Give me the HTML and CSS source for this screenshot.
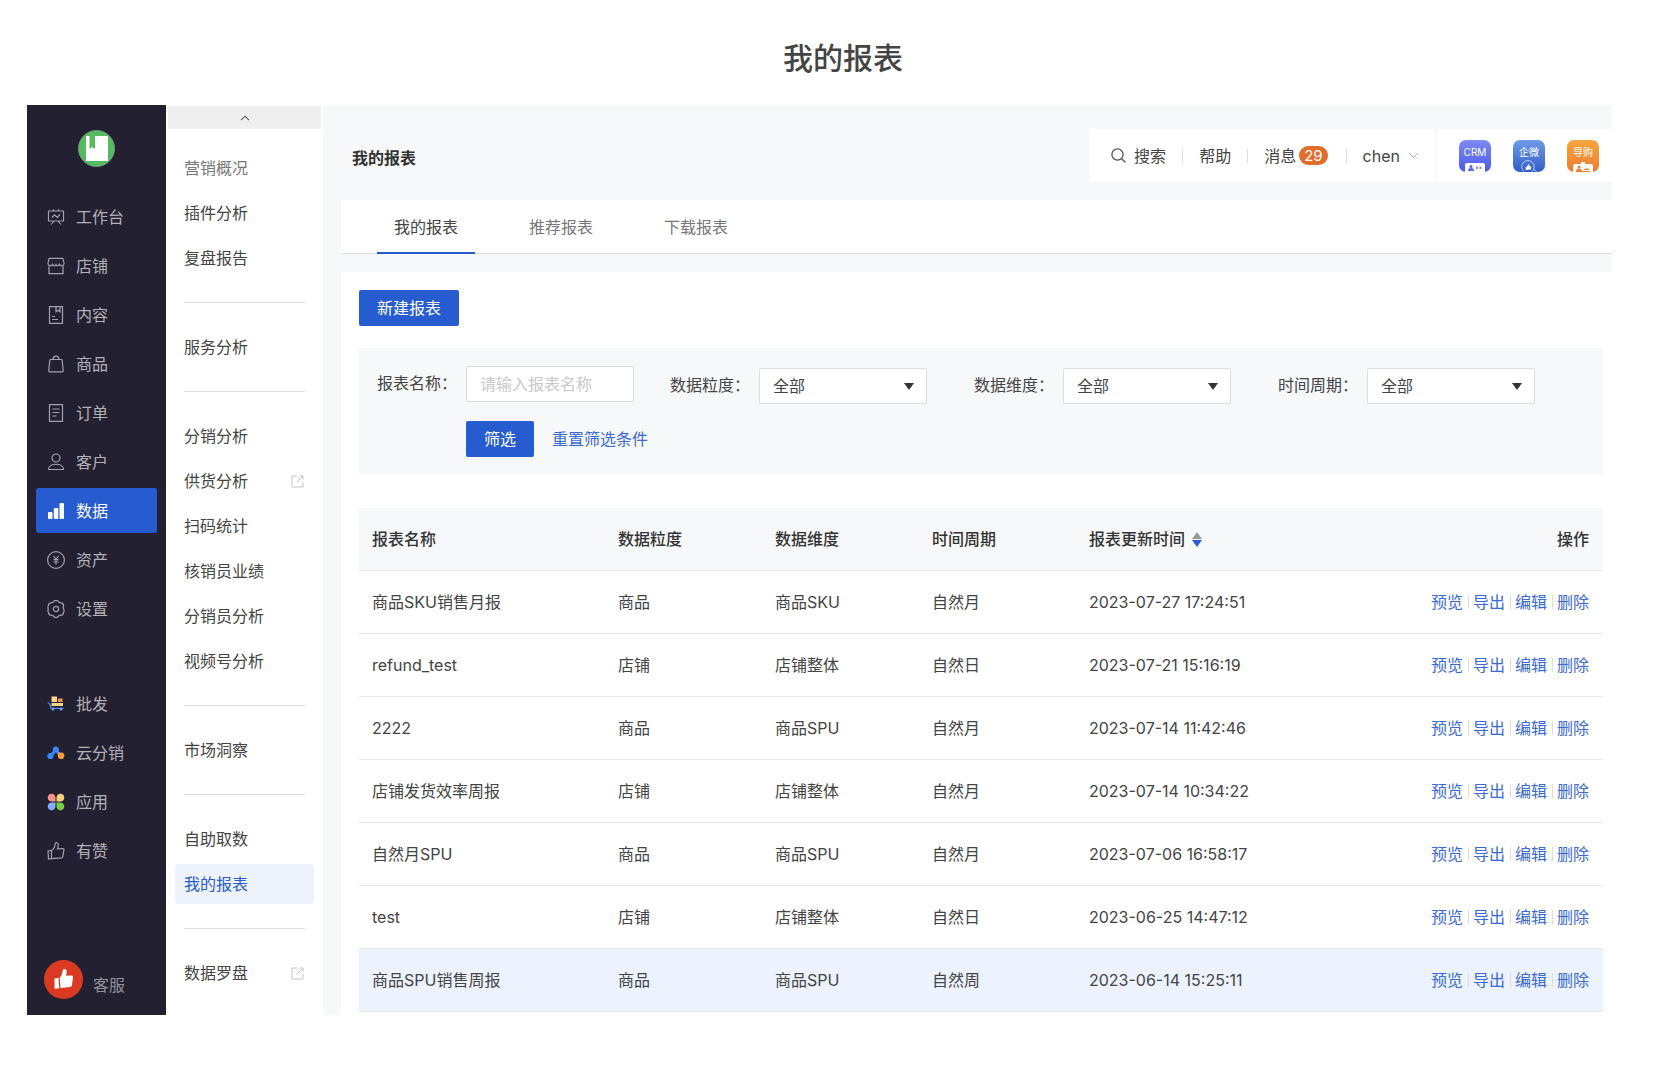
FILE: index.html
```
<!DOCTYPE html>
<html lang="zh-CN">
<head>
  <meta charset="UTF-8">
  <meta name="viewport" content="width=device-width, initial-scale=1.0">
  <title>我的报表</title>
  <link rel="stylesheet" href="styles.css">
</head>
<body>
  <h1 class="page-title">我的报表</h1>

  <div class="app">
    <!-- Main sidebar -->
    <aside class="sidebar">
      <svg class="logo" viewBox="0 0 37 37">
        <circle cx="18.500" cy="18.500" r="18" fill="#54bb60" stroke="#7d8f86" stroke-width="1"/>
        <path d="M8 6h3.500v13l2.700-2 2.800 2V6h13v25H8z" fill="#fff"/>
      </svg>

      <nav class="side-nav">
        <a class="side-link" href="#">
          <svg class="icon" viewBox="0 0 18 18"><path d="M1.500 3h15v10h-15zM6.500 3V1.300M11.500 3V1.300M7 13l-2.800 3.500M11 13l2.800 3.500M5 9.500l2.500-2.700 2.700 2.600L13 6.500"/></svg>
          工作台
        </a>
        <a class="side-link" href="#">
          <svg class="icon" viewBox="0 0 18 18"><path d="M2.300 1.300h13.400l1.400 5c0 2.900-3.800 3.200-4.700.9-.8 2-2.600 2.200-3.400.3-.8 1.900-2.600 1.700-3.400-.3-.9 2.300-4.700 2-4.700-.9zM2 8.800v7.900h14V8.800"/></svg>
          店铺
        </a>
        <a class="side-link" href="#">
          <svg class="icon" viewBox="0 0 18 18"><path d="M2.500.7h13v16.600h-13zM9 .7v5l2-1.500 2 1.500v-5M5 10.500h3M5 13.500h6"/></svg>
          内容
        </a>
        <a class="side-link" href="#">
          <svg class="icon" viewBox="0 0 18 18"><path d="M3.700 4.500h10.600c.5 0 .8.300.9.800l1 10.500c0 .6-.3 1-.9 1H2.700c-.6 0-.9-.4-.9-1l1-10.500c.1-.5.4-.8.9-.8zM6 4.500c0-4.400 6-4.400 6 0"/></svg>
          商品
        </a>
        <a class="side-link" href="#">
          <svg class="icon" viewBox="0 0 18 18"><path d="M2.500.7h13v16.600h-13zM5.500 5h7M5.500 8.500h7M5.500 12h4"/></svg>
          订单
        </a>
        <a class="side-link" href="#">
          <svg class="icon" viewBox="0 0 18 18"><circle cx="9" cy="5" r="4"/><path d="M1.500 16.500c0-7 15-7 15 0z"/></svg>
          客户
        </a>
        <a class="side-link active" href="#">
          <svg class="icon" viewBox="0 0 18 18"><g fill="#fff" stroke="none"><rect x="1" y="10" width="4.500" height="7" rx="1"/><rect x="6.800" y="6" width="4.500" height="11" rx="1"/><rect x="12.500" y="1" width="4.500" height="16" rx="1"/></g></svg>
          数据
        </a>
        <a class="side-link" href="#">
          <svg class="icon" viewBox="0 0 18 18"><circle cx="9" cy="9" r="8.400"/><path d="M6.500 5L9 8.300 11.500 5M9 8.300V13.500M6.500 8.700h5M6.500 11h5"/></svg>
          资产
        </a>
        <a class="side-link" href="#">
          <svg class="icon" viewBox="0 0 18 18"><path d="M7 1.200Q9-.4 11 1.200q.8 1.700 2.700 1.400 2.900.5 2.900 3.200-1 1.600 0 3.200 1 1.600 0 3.200 0 2.700-2.900 3.200-1.900-.3-2.700 1.400-2 1.600-4 0-.8-1.700-2.700-1.400-2.900-.5-2.900-3.200-1-1.600 0-3.200-1-1.600 0-3.200 0-2.700 2.900-3.200Q6.200 2.900 7 1.200z"/><circle cx="9" cy="9" r="2.700"/></svg>
          设置
        </a>
      </nav>

      <nav class="side-nav side-nav-more">
        <a class="side-link" href="#">
          <svg class="icon" viewBox="0 0 18 18"><g stroke="none"><path d="M4.500 1.500H10v5.500H4.500z" fill="#ffd58a"/><path d="M11 3.500h4.500V7H11z" fill="#f29b38"/><path d="M4.500 8h11.500v3H4.500z" fill="#fbd38b"/></g><path d="M.8 7.500l2 1.500 1.200 4.300h12.500" stroke="#4e8be8" stroke-width="1.200"/><circle cx="6" cy="14" r="1.500" fill="#6ba3f5" stroke="none"/><circle cx="14" cy="14" r="1.500" fill="#6ba3f5" stroke="none"/></svg>
          批发
        </a>
        <a class="side-link" href="#">
          <svg class="icon" viewBox="0 0 18 18"><path d="M3.500 12L8.800 6l3 3.500" stroke="#3b87f7" stroke-width="3"/><g stroke="none"><circle cx="3.400" cy="12" r="3.100" fill="#3b87f7"/><circle cx="8.800" cy="5.600" r="3" fill="#3b87f7"/><path d="M11 8.500h3.500a3.300 3.300 0 1 1-3.700 3.500z" fill="#f59c3c"/></g></svg>
          云分销
        </a>
        <a class="side-link" href="#">
          <svg class="icon" viewBox="0 0 18 18"><g stroke="none"><path d="M8.500 8.500H4.800A3.900 3.900 0 1 1 8.500 4.800z" fill="#f6928b"/><path d="M9.500 8.500V4.800a3.900 3.900 0 1 1 3.700 3.700z" fill="#fbcf7d"/><path d="M8.500 9.500v3.700a3.900 3.900 0 1 1-3.700-3.700z" fill="#86abfb"/><path d="M9.500 9.500h3.700a3.900 3.900 0 1 1-3.700 3.700z" fill="#76cf42"/></g></svg>
          应用
        </a>
        <a class="side-link" href="#">
          <svg class="icon" viewBox="0 0 18 18"><path d="M1 9l3.500-.6v8.300L1.500 17zM4.500 8.400C7 7.200 8 5 8.300 1.500c.2-1.300 3-1.200 3 1.300 0 1.700-.3 3-.8 4l5.300-.3c.8 0 1.200.6 1.100 1.400l-1 6.600c-.1.700-.6 1.200-1.400 1.300l-10 .9"/></svg>
          有赞
        </a>
      </nav>

      <a class="service" href="#">
        <svg class="service-icon" viewBox="0 0 39 39"><circle cx="19.500" cy="19.500" r="19.500" fill="#da3a22"/><path d="M10.500 18.500l4-.8.8 10.500-4 .6c-.5 0-.8-.3-.8-.8zM15.700 17.500c2-1.500 2.500-4.500 3-7.300.4-2 4.300-1.800 4 1.500l-.6 4 5.500-.3c1 0 1.500.7 1.400 1.600L28 25c-.1 1-.8 1.700-1.800 1.900l-9.700 1.200z" fill="#fff"/></svg>
        客服
      </a>
    </aside>

    <!-- Second level menu -->
    <nav class="submenu">
      <button class="submenu-up" type="button" aria-label="向上">
        <svg width="10" height="6" viewBox="0 0 10 6"><path d="M1 5.200l4-4 4 4" fill="none" stroke="#555" stroke-width="1.100"/></svg>
      </button>
      <div class="submenu-list">
        <a class="sub-link faded" href="#">营销概况</a>
        <a class="sub-link" href="#">插件分析</a>
        <a class="sub-link" href="#">复盘报告</a>
        <hr class="sub-divider">
        <a class="sub-link" href="#">服务分析</a>
        <hr class="sub-divider">
        <a class="sub-link" href="#">分销分析</a>
        <a class="sub-link" href="#">供货分析
          <svg class="external" viewBox="0 0 13 13"><path d="M6 1H1v11h11V7M8.500 1H12v3.500M12 1L5.500 7.500"/></svg>
        </a>
        <a class="sub-link" href="#">扫码统计</a>
        <a class="sub-link" href="#">核销员业绩</a>
        <a class="sub-link" href="#">分销员分析</a>
        <a class="sub-link" href="#">视频号分析</a>
        <hr class="sub-divider">
        <a class="sub-link" href="#">市场洞察</a>
        <hr class="sub-divider">
        <a class="sub-link" href="#">自助取数</a>
        <a class="sub-link active" href="#">我的报表</a>
        <hr class="sub-divider">
        <a class="sub-link" href="#">数据罗盘
          <svg class="external" viewBox="0 0 13 13"><path d="M6 1H1v11h11V7M8.500 1H12v3.500M12 1L5.500 7.500"/></svg>
        </a>
      </div>
    </nav>

    <main class="main">
      <header class="header">
        <h2 class="header-title">我的报表</h2>
        <div class="toolbar">
          <a class="tool" href="#">
            <svg class="search-icon" viewBox="0 0 15 15"><circle cx="6.500" cy="6.500" r="5.600"/><path d="M10.600 10.600l3.900 3.900"/></svg>
            搜索
          </a>
          <a class="tool" href="#">帮助</a>
          <a class="tool messages" href="#">消息<span class="badge">29</span></a>
          <a class="tool user" href="#">chen
            <svg width="11" height="7" viewBox="0 0 11 7"><path d="M1 1l4.500 4.500L10 1" fill="none" stroke="#aaa"/></svg>
          </a>
        </div>
        <div class="apps">
          <svg class="app-icon" viewBox="0 0 32 32">
            <defs><linearGradient id="crm" x2="0" y2="1"><stop offset="0" stop-color="#7d8bf3"/><stop offset="1" stop-color="#4c5aec"/></linearGradient></defs>
            <rect width="32" height="32" rx="7" fill="url(#crm)"/>
            <text class="app-text" x="16" y="16">CRM</text>
            <path d="M6 32v-7q0-2 2-2h16q2 0 2 2v7z" fill="#fff"/>
            <circle cx="12" cy="26.500" r="1.500" fill="#5563ee"/><path d="M9 31q0-3 3-3t3 3z" fill="#5563ee"/><path d="M17 26.500h2v2.500h-2zM20.500 26.500h2v2.500h-2z" fill="#8792f3"/>
          </svg>
          <svg class="app-icon" viewBox="0 0 32 32">
            <defs><linearGradient id="wecom" x2="0" y2="1"><stop offset="0" stop-color="#6f9bea"/><stop offset="1" stop-color="#335dc6"/></linearGradient></defs>
            <rect width="32" height="32" rx="7" fill="url(#wecom)"/>
            <text class="app-text" x="16" y="16">企微</text>
            <g fill="none" stroke="#bccff5"><path d="M11 31.500a6.200 6.200 0 1 1 8 0M21 29.500l2.500 2"/></g>
            <path d="M12.500 27l1.500-.3 1.200-2.500 1.200.4-.2 1.700 2.200.2-.5 3-5.200.6z" fill="#fff"/>
          </svg>
          <svg class="app-icon" viewBox="0 0 32 32">
            <defs><linearGradient id="guide" x2="0" y2="1"><stop offset="0" stop-color="#f5a63e"/><stop offset="1" stop-color="#ef7b2f"/></linearGradient></defs>
            <rect width="32" height="32" rx="7" fill="url(#guide)"/>
            <text class="app-text" x="16" y="16">导购</text>
            <path d="M14 22h4v2h6q2 0 2 2v6h-3v-1H9v1H6v-6q0-2 2-2h6z" fill="#fff"/>
            <circle cx="12" cy="27" r="1.600" fill="#f08535"/><path d="M9 31.500q0-3 3-3t3 3zM17.500 28.500h4.500v1.500h-4.500z" fill="#f08535"/>
          </svg>
        </div>
      </header>

      <nav class="tabs">
        <a class="tab active" href="#">我的报表</a>
        <a class="tab" href="#">推荐报表</a>
        <a class="tab" href="#">下载报表</a>
      </nav>

      <section class="content">
        <button class="btn btn-new" type="button">新建报表</button>

        <!-- Filters -->
        <form class="filter">
          <div class="filter-row">
            <div class="field field-name">
              <label for="name">报表名称：</label>
              <input class="control" type="text" id="name" placeholder="请输入报表名称">
            </div>
            <div class="field">
              <label for="grain">数据粒度：</label>
              <div class="select-box"><select class="control" id="grain"><option>全部</option></select></div>
            </div>
            <div class="field">
              <label for="dimension">数据维度：</label>
              <div class="select-box"><select class="control" id="dimension"><option>全部</option></select></div>
            </div>
            <div class="field">
              <label for="period">时间周期：</label>
              <div class="select-box"><select class="control" id="period"><option>全部</option></select></div>
            </div>
          </div>
          <div class="filter-actions">
            <button class="btn" type="button">筛选</button>
            <a class="link" href="#">重置筛选条件</a>
          </div>
        </form>

        <!-- Report list -->
        <table class="table">
          <thead>
            <tr>
              <th class="col-name">报表名称</th>
              <th class="col-mid">数据粒度</th>
              <th class="col-mid">数据维度</th>
              <th class="col-mid">时间周期</th>
              <th>报表更新时间<svg class="sort" viewBox="0 0 10 16"><path d="M5 0l5 7H0z" fill="#999"/><path d="M0 8h10l-5 7z" fill="#275cd0"/></svg></th>
              <th class="ops">操作</th>
            </tr>
          </thead>
          <tbody>
            <tr>
              <td>商品SKU销售月报</td><td>商品</td><td>商品SKU</td><td>自然月</td><td>2023-07-27 17:24:51</td>
              <td class="ops"><a class="link" href="#">预览</a><a class="link" href="#">导出</a><a class="link" href="#">编辑</a><a class="link" href="#">删除</a></td>
            </tr>
            <tr>
              <td>refund_test</td><td>店铺</td><td>店铺整体</td><td>自然日</td><td>2023-07-21 15:16:19</td>
              <td class="ops"><a class="link" href="#">预览</a><a class="link" href="#">导出</a><a class="link" href="#">编辑</a><a class="link" href="#">删除</a></td>
            </tr>
            <tr>
              <td>2222</td><td>商品</td><td>商品SPU</td><td>自然月</td><td>2023-07-14 11:42:46</td>
              <td class="ops"><a class="link" href="#">预览</a><a class="link" href="#">导出</a><a class="link" href="#">编辑</a><a class="link" href="#">删除</a></td>
            </tr>
            <tr>
              <td>店铺发货效率周报</td><td>店铺</td><td>店铺整体</td><td>自然月</td><td>2023-07-14 10:34:22</td>
              <td class="ops"><a class="link" href="#">预览</a><a class="link" href="#">导出</a><a class="link" href="#">编辑</a><a class="link" href="#">删除</a></td>
            </tr>
            <tr>
              <td>自然月SPU</td><td>商品</td><td>商品SPU</td><td>自然月</td><td>2023-07-06 16:58:17</td>
              <td class="ops"><a class="link" href="#">预览</a><a class="link" href="#">导出</a><a class="link" href="#">编辑</a><a class="link" href="#">删除</a></td>
            </tr>
            <tr>
              <td>test</td><td>店铺</td><td>店铺整体</td><td>自然日</td><td>2023-06-25 14:47:12</td>
              <td class="ops"><a class="link" href="#">预览</a><a class="link" href="#">导出</a><a class="link" href="#">编辑</a><a class="link" href="#">删除</a></td>
            </tr>
            <tr class="selected">
              <td>商品SPU销售周报</td><td>商品</td><td>商品SPU</td><td>自然周</td><td>2023-06-14 15:25:11</td>
              <td class="ops"><a class="link" href="#">预览</a><a class="link" href="#">导出</a><a class="link" href="#">编辑</a><a class="link" href="#">删除</a></td>
            </tr>
          </tbody>
        </table>
      </section>
    </main>
  </div>
</body>
</html>
```
FILE: styles.css
```
/* General reset */
* {
  margin: 0;
  padding: 0;
  box-sizing: border-box;
}
body {
  font-family: Inter, "Noto Sans CJK SC", sans-serif;
  font-size: 16px;
  line-height: 24px;
  color: #444;
  background-color: #fff;
}
a {
  color: inherit;
  text-decoration: none;
}
button, input, select {
  font: inherit;
  color: inherit;
}

.page-title {
  padding: 36px 0 25px 12px;
  font-size: 30px;
  line-height: 44px;
  font-weight: 500;
  text-align: center;
}
.app {
  display: flex;
  margin: 0 62px 0 27px;
}

/* Main sidebar */
.sidebar {
  display: flex;
  flex-direction: column;
  flex: none;
  width: 139px;
  padding: 25px 9px 16px;
  background-color: #222031;
  color: #b2b1b8;
}
.logo {
  width: 37px;
  height: 37px;
  margin: 0 auto 27px;
}
.side-nav {
  display: flex;
  flex-direction: column;
  gap: 4px;
}
.side-nav-more {
  margin-top: 50px;
}
.side-link {
  display: flex;
  align-items: center;
  gap: 11px;
  height: 45px;
  padding-left: 11px;
  border-radius: 3px;
}
.side-link.active {
  background-color: #275cd0;
  color: #fff;
}
.icon {
  width: 18px;
  height: 18px;
  fill: none;
  stroke: #a3a2aa;
  stroke-width: 1.2;
}
.service {
  display: flex;
  align-items: flex-end;
  gap: 10px;
  margin-top: auto;
  padding-left: 8px;
  line-height: 28px;
  color: #93929b;
}
.service-icon {
  width: 39px;
  height: 39px;
}

/* Second level menu */
.submenu {
  flex: none;
  width: 157px;
  padding: 1px 2px 22px;
}
.submenu-up {
  display: flex;
  align-items: center;
  justify-content: center;
  width: 100%;
  height: 23px;
  border: none;
  background-color: #efefef;
}
.submenu-list {
  display: flex;
  flex-direction: column;
  gap: 5px;
  padding: 19px 7px 0;
}
.sub-link {
  display: flex;
  align-items: center;
  justify-content: space-between;
  height: 40px;
  padding: 0 10px 0 9px;
  border-radius: 3px;
}
.sub-link.faded {
  color: #777;
}
.sub-link.active {
  background-color: #edf2fc;
  color: #275cd0;
}
.sub-divider {
  height: 1px;
  margin: 19px 9px;
  border: none;
  background-color: #dcdcdc;
}
.external {
  width: 13px;
  height: 13px;
  fill: none;
  stroke: #c4c4c4;
}

/* Header */
.main {
  flex: 1;
  min-width: 0;
  display: flex;
  flex-direction: column;
  padding-left: 18px;
  background-color: #f7f8fa;
}
.header {
  display: flex;
  align-items: center;
  gap: 2px;
  padding: 24px 0 18px 11px;
}
.header-title {
  margin-right: auto;
  padding-top: 4px;
  font-size: 16px;
  font-weight: 700;
  color: #333;
}
.toolbar {
  display: flex;
  align-items: center;
  height: 53px;
  padding-left: 6px;
  background-color: #fff;
}
.tool {
  display: flex;
  align-items: center;
  height: 14px;
  padding: 0 16px;
  border-left: 1px solid #ddd;
}
.tool:first-child {
  gap: 8px;
  border-left: none;
}
.search-icon {
  width: 15px;
  height: 15px;
  fill: none;
  stroke: #555;
  stroke-width: 1.3;
}
.messages {
  padding-right: 18px;
}
.badge {
  margin-left: 3px;
  padding: 0 5px;
  border-radius: 10px;
  background-color: #df6e2d;
  color: #fff;
  font-size: 15px;
  line-height: 19px;
}
.user {
  gap: 8px;
}
.apps {
  display: flex;
  align-items: center;
  gap: 22px;
  height: 53px;
  padding: 0 13px 0 22px;
  background-color: #fff;
}
.app-icon {
  width: 32px;
  height: 32px;
}
.app-text {
  fill: #fff;
  font-size: 10px;
  text-anchor: middle;
}

/* Tabs */
.tabs {
  display: flex;
  gap: 37px;
  height: 54px;
  padding-left: 36px;
  border-bottom: 1px solid #ddd;
  background-color: #fff;
}
.tab {
  height: 54px;
  padding: 0 17px;
  line-height: 55px;
  color: #777;
}
.tab.active {
  border-bottom: 2px solid #275cd0;
  color: #444;
}

/* Content */
.content {
  flex: 1;
  margin-top: 18px;
  padding: 18px 9px 0 18px;
  background-color: #fff;
}
.btn {
  height: 36px;
  padding: 0 18px;
  border: none;
  border-radius: 2px;
  background-color: #275cd0;
  color: #fff;
  cursor: pointer;
}
.btn-new {
  display: block;
}
.link {
  color: #3b6ad5;
}

/* Filters */
.filter {
  margin: 22px 0 34px;
  padding: 18px 18px 17px;
  background-color: #f7f8fa;
}
.filter-row {
  display: flex;
  flex-wrap: wrap;
  gap: 47px;
}
.field {
  display: flex;
  gap: 9px;
  padding-top: 2px;
}
.field-name {
  margin-right: -11px;
  padding-top: 0;
}
.field label {
  line-height: 34px;
}
.control {
  display: block;
  width: 168px;
  height: 36px;
  padding: 0 13px;
  border: 1px solid #dcdee0;
  border-radius: 2px;
  background-color: #fff;
}
.control::placeholder {
  color: #c8c9cc;
}
.select-box {
  position: relative;
}
.select-box select {
  appearance: none;
}
.select-box::after {
  content: "";
  position: absolute;
  right: 13px;
  top: 15px;
  border: 5px solid transparent;
  border-top: 7px solid #333;
  border-bottom: none;
  pointer-events: none;
}
.filter-actions {
  display: flex;
  align-items: center;
  gap: 18px;
  margin: 17px 0 0 89px;
}

/* Report list */
.table {
  width: 100%;
  border-collapse: collapse;
  table-layout: fixed;
}
.table th, .table td {
  height: 63px;
  padding: 0 0 0 13px;
  border-bottom: 1px solid #e8eaed;
  text-align: left;
}
.table th {
  height: 62px;
  background-color: #f7f8fa;
  font-weight: 500;
  color: #333;
}
.table .col-name {
  width: 246px;
}
.table .col-mid {
  width: 157px;
}
.table .ops {
  padding-right: 14px;
  text-align: right;
}
.ops .link + .link {
  margin-left: 5px;
  padding-left: 5px;
  background: linear-gradient(#ddd, #ddd) no-repeat left center / 1px 14px;
}
.sort {
  width: 10px;
  height: 16px;
  margin-left: 7px;
  vertical-align: -3px;
}
.table .selected {
  background-color: #ecf3fe;
}
```
